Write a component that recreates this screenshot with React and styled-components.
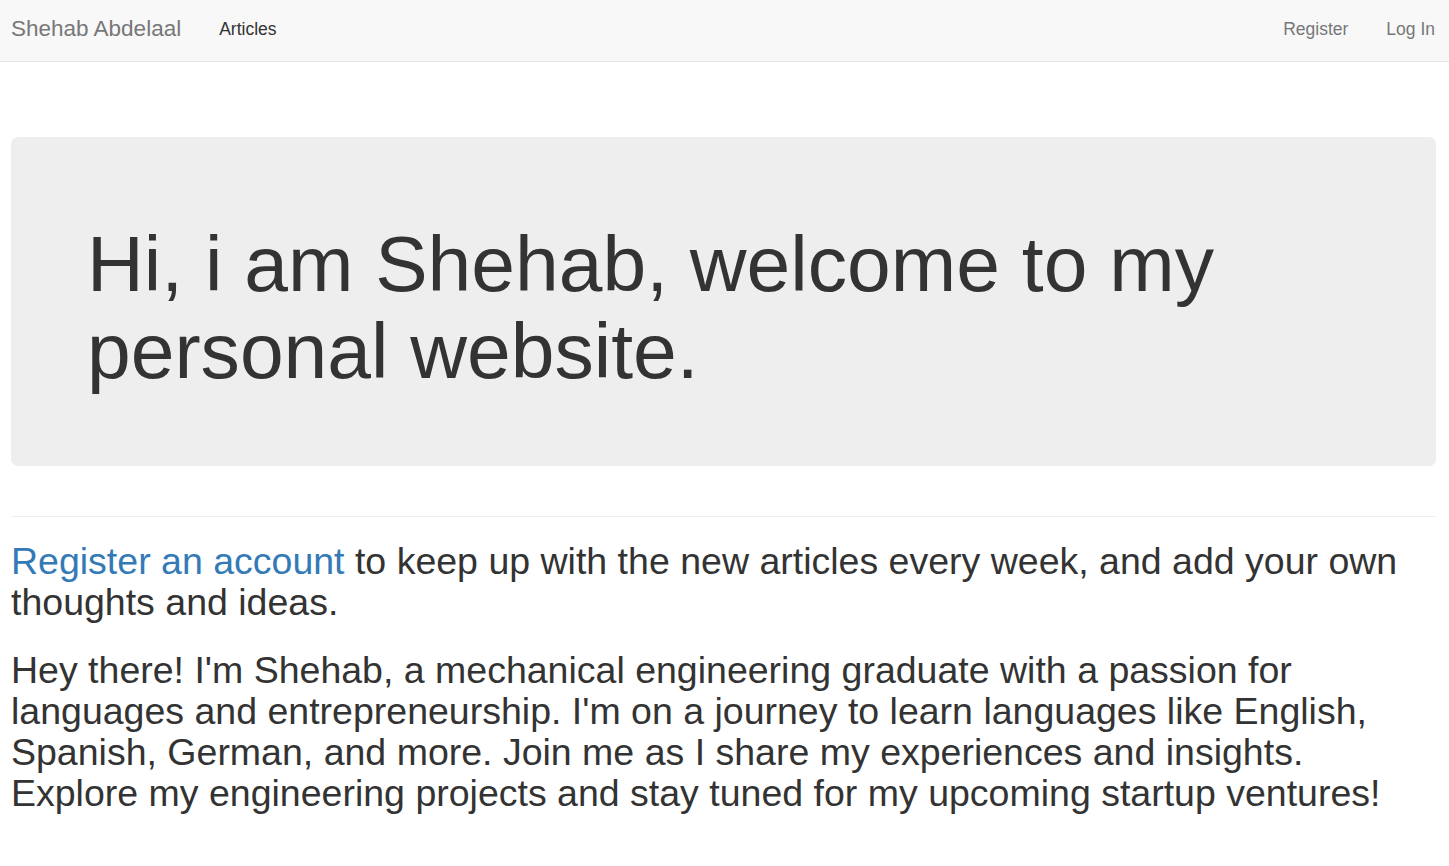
import React from "react";
import styled, { createGlobalStyle } from "styled-components";

const Global = createGlobalStyle`
  html, body { margin: 0; padding: 0; background: #fff; }
  body {
    font-family: "Liberation Sans", Arial, Helvetica, sans-serif;
    color: #333;
  }
  * { box-sizing: border-box; }
`;

const Navbar = styled.nav`
  height: 62px;
  background: #f8f8f8;
  border-bottom: 1px solid #e7e7e7;
  display: flex;
  align-items: center;
  justify-content: space-between;
  padding: 0 14px 3px 11px;
`;

const NavGroup = styled.div`
  display: flex;
  align-items: center;
  gap: ${(p) => p.$gap || 38}px;
`;

const Brand = styled.a`
  font-size: 22.5px;
  color: #777;
  text-decoration: none;
`;

const NavLink = styled.a`
  font-size: 17.5px;
  color: ${(p) => (p.$active ? "#333" : "#777")};
  text-decoration: none;
`;

const Container = styled.main`
  padding: 75px 13px 0 11px;
`;

const Jumbotron = styled.section`
  background: #eee;
  border-radius: 7px;
  padding: 84px 76px 71px;
`;

const Title = styled.h1`
  margin: 0;
  font-size: 78.6px;
  line-height: 87px;
  font-weight: 400;
  color: #333;
`;

const Rule = styled.hr`
  margin: 50px 0 0;
  border: 0;
  border-top: 1px solid #eee;
`;

const Text = styled.p`
  margin: ${(p) => p.$mt}px 0 0;
  font-size: 37.5px;
  line-height: 41px;
  color: #333;
`;

const Link = styled.a`
  color: #337ab7;
  text-decoration: none;
`;

export default function App() {
  return (
    <>
      <Global />
      <Navbar>
        <NavGroup $gap={38}>
          <Brand href="#">Shehab Abdelaal</Brand>
          <NavLink href="#" $active>Articles</NavLink>
        </NavGroup>
        <NavGroup $gap={38}>
          <NavLink href="#">Register</NavLink>
          <NavLink href="#">Log In</NavLink>
        </NavGroup>
      </Navbar>
      <Container>
        <Jumbotron>
          <Title>Hi, i am Shehab, welcome to my personal website.</Title>
        </Jumbotron>
        <Rule />
        <Text $mt={24}>
          <Link href="#">Register an account</Link> to keep up with the new
          articles every week, and add your own thoughts and ideas.
        </Text>
        <Text $mt={27}>
          Hey there! I'm Shehab, a mechanical engineering graduate with a
          passion for languages and entrepreneurship. I'm on a journey to learn
          languages like English, Spanish, German, and more. Join me as I share
          my experiences and insights. Explore my engineering projects and stay
          tuned for my upcoming startup ventures!
        </Text>
      </Container>
    </>
  );
}
